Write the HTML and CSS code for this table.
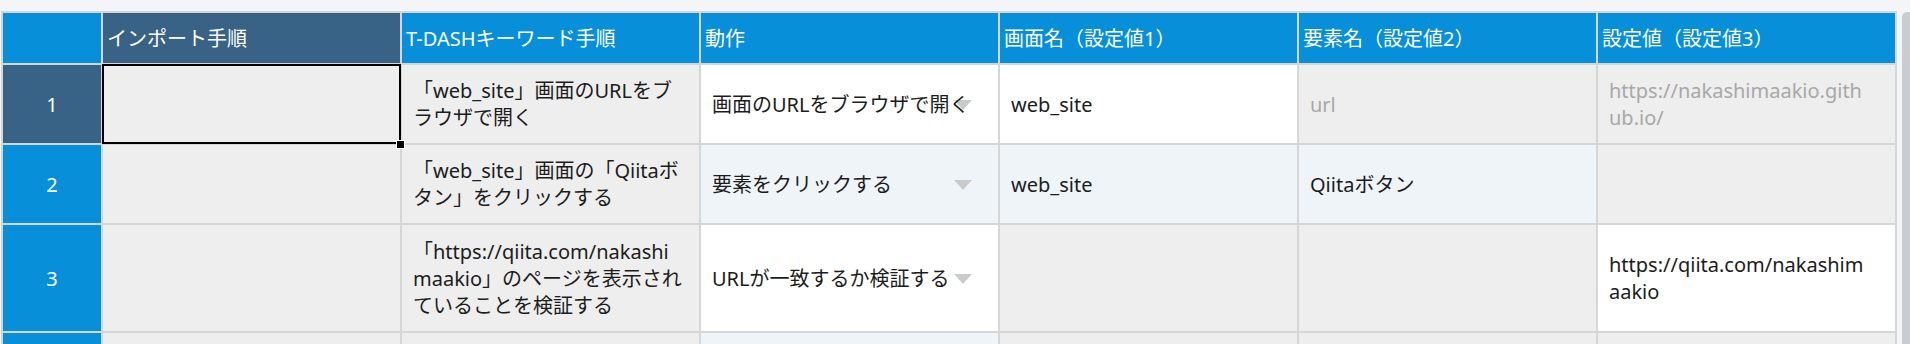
FILE: index.html
```html
<!DOCTYPE html>
<html lang="ja">
<head>
<meta charset="utf-8">
<title>T-DASH</title>
<link rel="stylesheet" href="styles.css">
</head>
<body>
<div class="page">
  <div class="sheet">
    <div class="hcell"></div>
    <div class="hcell dark">インポート手順</div>
    <div class="hcell">T-DASHキーワード手順</div>
    <div class="hcell">動作</div>
    <div class="hcell">画面名（設定値1）</div>
    <div class="hcell">要素名（設定値2）</div>
    <div class="hcell">設定値（設定値3）</div>

    <div class="rownum dark">1</div>
    <div class="cell ro selected"><span class="handle"></span></div>
    <div class="cell ro">「web_site」画面のURLをブ<br>ラウザで開く</div>
    <div class="cell edit select"><span class="txt">画面のURLをブラウザで開く</span></div>
    <div class="cell edit">web_site</div>
    <div class="cell ro muted">url</div>
    <div class="cell ro muted">https://nakashimaakio.gith<br>ub.io/</div>

    <div class="rownum">2</div>
    <div class="cell ro"></div>
    <div class="cell ro">「web_site」画面の「Qiitaボ<br>タン」をクリックする</div>
    <div class="cell hover select"><span class="txt">要素をクリックする</span></div>
    <div class="cell hover">web_site</div>
    <div class="cell hover">Qiitaボタン</div>
    <div class="cell ro"></div>

    <div class="rownum">3</div>
    <div class="cell ro"></div>
    <div class="cell ro">「https://qiita.com/nakashi<br>maakio」のページを表示され<br>ていることを検証する</div>
    <div class="cell edit select"><span class="txt">URLが一致するか検証する</span></div>
    <div class="cell ro"></div>
    <div class="cell ro"></div>
    <div class="cell edit">https://qiita.com/nakashim<br>aakio</div>

    <div class="rownum"></div>
    <div class="cell ro"></div>
    <div class="cell ro"></div>
    <div class="cell hover"></div>
    <div class="cell ro"></div>
    <div class="cell ro"></div>
    <div class="cell ro"></div>
  </div>
  <div class="scrollbar"></div>
</div>
</body>
</html>
```

FILE: styles.css
```css
html, body {
  margin: 0;
  padding: 0;
  height: 344px;
  overflow: hidden;
  background: #f3f5f9;
}

.page {
  display: flex;
  align-items: flex-start;
  gap: 5px;
  padding-left: 1px;
  font-family: "Noto Sans", "Noto Sans CJK JP", sans-serif;
  font-size: 20px;
  color: #1c1c1c;
}

.sheet {
  margin-top: 11px;
  display: grid;
  grid-template-columns: 98px repeat(6, 297px);
  grid-template-rows: 50px 78px 78px 106px 11px;
  gap: 2px;
  padding: 2px 2px 0 2px;
  background: #d6d6d6;
}

.hcell {
  background: #078fd9;
  color: #ffffff;
  display: flex;
  align-items: center;
  padding: 0 4px 2px 4px;
  white-space: nowrap;
}

.hcell.dark,
.rownum.dark {
  background: #386387;
}

.rownum {
  background: #078fd9;
  color: #ffffff;
  display: flex;
  align-items: center;
  justify-content: center;
}

.cell {
  position: relative;
  display: flex;
  align-items: center;
  padding: 0 14px 0 11px;
  line-height: 27px;
  white-space: nowrap;
}

.cell.ro {
  background: #eeeeee;
}

.cell.edit {
  background: #ffffff;
}

.cell.hover {
  background: #eff4f9;
}

.cell.muted {
  color: #a8a8a8;
}

.cell.select::after {
  content: "";
  position: absolute;
  right: 26px;
  top: 50%;
  margin-top: -4px;
  border-left: 9px solid transparent;
  border-right: 9px solid transparent;
  border-top: 10px solid #cacaca;
}

.cell.select .txt {
  position: relative;
  z-index: 1;
}

.cell.selected::before {
  content: "";
  position: absolute;
  top: -1px;
  left: -1px;
  right: -1px;
  bottom: -1px;
  border: 2px solid #000000;
}

.handle {
  position: absolute;
  right: -5px;
  bottom: -6px;
  width: 7px;
  height: 7px;
  background: #000000;
  border: 1px solid #ffffff;
  z-index: 2;
}

.scrollbar {
  margin-top: 12px;
  width: 8px;
  height: 332px;
  background: #c9ccd1;
  border-radius: 5px 0 0 0;
}
```
